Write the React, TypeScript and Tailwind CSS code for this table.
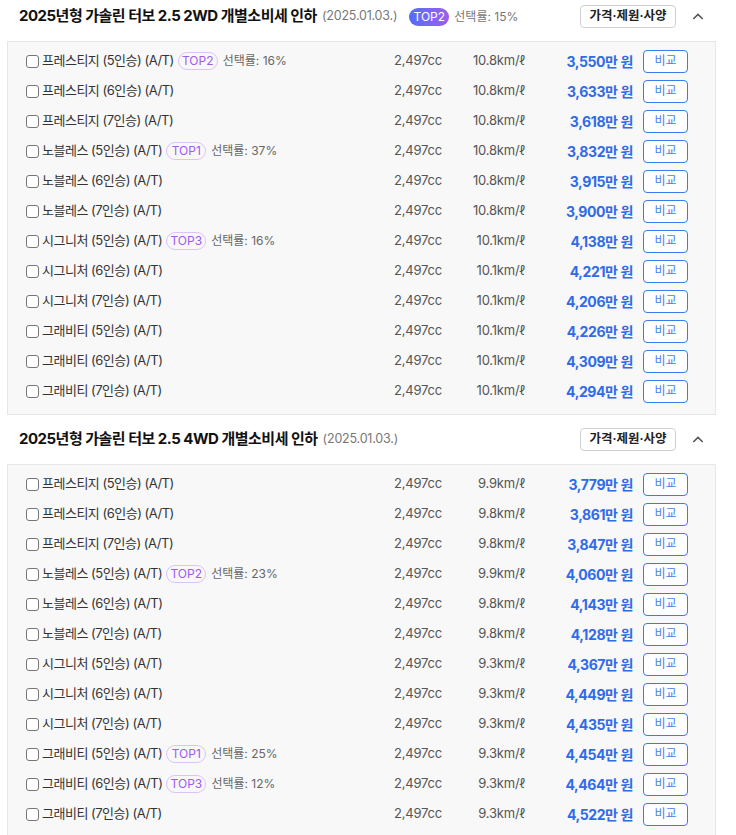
import React from "react";

type Row = { name: string; top?: string; rate?: string; km: string; price: string };

const rows2wd: Row[] = [
  { name: "프레스티지 (5인승) (A/T)", top: "TOP2", rate: "16%", km: "10.8km/ℓ", price: "3,550" },
  { name: "프레스티지 (6인승) (A/T)", km: "10.8km/ℓ", price: "3,633" },
  { name: "프레스티지 (7인승) (A/T)", km: "10.8km/ℓ", price: "3,618" },
  { name: "노블레스 (5인승) (A/T)", top: "TOP1", rate: "37%", km: "10.8km/ℓ", price: "3,832" },
  { name: "노블레스 (6인승) (A/T)", km: "10.8km/ℓ", price: "3,915" },
  { name: "노블레스 (7인승) (A/T)", km: "10.8km/ℓ", price: "3,900" },
  { name: "시그니처 (5인승) (A/T)", top: "TOP3", rate: "16%", km: "10.1km/ℓ", price: "4,138" },
  { name: "시그니처 (6인승) (A/T)", km: "10.1km/ℓ", price: "4,221" },
  { name: "시그니처 (7인승) (A/T)", km: "10.1km/ℓ", price: "4,206" },
  { name: "그래비티 (5인승) (A/T)", km: "10.1km/ℓ", price: "4,226" },
  { name: "그래비티 (6인승) (A/T)", km: "10.1km/ℓ", price: "4,309" },
  { name: "그래비티 (7인승) (A/T)", km: "10.1km/ℓ", price: "4,294" },
];

const rows4wd: Row[] = [
  { name: "프레스티지 (5인승) (A/T)", km: "9.9km/ℓ", price: "3,779" },
  { name: "프레스티지 (6인승) (A/T)", km: "9.8km/ℓ", price: "3,861" },
  { name: "프레스티지 (7인승) (A/T)", km: "9.8km/ℓ", price: "3,847" },
  { name: "노블레스 (5인승) (A/T)", top: "TOP2", rate: "23%", km: "9.9km/ℓ", price: "4,060" },
  { name: "노블레스 (6인승) (A/T)", km: "9.8km/ℓ", price: "4,143" },
  { name: "노블레스 (7인승) (A/T)", km: "9.8km/ℓ", price: "4,128" },
  { name: "시그니처 (5인승) (A/T)", km: "9.3km/ℓ", price: "4,367" },
  { name: "시그니처 (6인승) (A/T)", km: "9.3km/ℓ", price: "4,449" },
  { name: "시그니처 (7인승) (A/T)", km: "9.3km/ℓ", price: "4,435" },
  { name: "그래비티 (5인승) (A/T)", top: "TOP1", rate: "25%", km: "9.3km/ℓ", price: "4,454" },
  { name: "그래비티 (6인승) (A/T)", top: "TOP3", rate: "12%", km: "9.3km/ℓ", price: "4,464" },
  { name: "그래비티 (7인승) (A/T)", km: "9.3km/ℓ", price: "4,522" },
];

function Chevron() {
  return (
    <svg width="14" height="9" viewBox="0 0 14 9" fill="none">
      <path d="M1.5 7.5L7 2L12.5 7.5" stroke="#555" strokeWidth="1.8" />
    </svg>
  );
}

function Header({ title, top, rate }: { title: string; top?: string; rate?: string }) {
  return (
    <div className="flex h-[49px] items-center pl-[19px] pr-[32px]">
      <div className="flex flex-1 items-center">
        <span className="text-[15px] font-bold text-[#111] tracking-[-0.5px]">{title}</span>
        <span className="ml-[5px] text-[12.5px] text-[#777] tracking-[-0.2px]">(2025.01.03.)</span>
        {top && (
          <span className="ml-[12px] flex h-[18px] w-[40px] items-center justify-center rounded-full bg-gradient-to-r from-[#4f6ef7] to-[#9b5cf0] text-[12px] text-white">
            {top}
          </span>
        )}
        {rate && <span className="ml-[5px] text-[12px] text-[#777]">선택률: {rate}</span>}
      </div>
      <button className="flex h-[23px] w-[96px] items-center justify-center rounded-[4px] border border-[#cfcfcf] bg-white text-[12.5px] font-semibold text-[#222]">
        가격·제원·사양
      </button>
      <div className="ml-[16px] flex w-[12px] justify-center">
        <Chevron />
      </div>
    </div>
  );
}

function RowItem({ r }: { r: Row }) {
  return (
    <div className="flex h-[30px] items-center pl-[18px] pr-[27px]">
      <div className="flex flex-1 items-center">
        <span className="h-[13px] w-[13px] rounded-[3px] border border-[#767676] bg-white" />
        <span className="ml-[3px] text-[13px] text-[#333] tracking-[-0.5px]">{r.name}</span>
        {r.top && (
          <span className="ml-[4px] flex h-[18px] w-[40px] items-center justify-center rounded-full border border-[#dcc4fb] text-[12px] text-[#a259f0]">
            {r.top}
          </span>
        )}
        {r.rate && <span className="ml-[5px] text-[12px] text-[#666]">선택률: {r.rate}</span>}
      </div>
      <span className="w-[70px] text-right text-[13px] text-[#555] tracking-[-0.2px]">2,497cc</span>
      <span className="w-[83px] text-right text-[13px] text-[#555] tracking-[-0.2px]">{r.km}</span>
      <span className="w-[108px] text-right text-[14px] font-bold text-[#2f6be8] tracking-[-0.4px]">
        {r.price}만 원
      </span>
      <button className="ml-[10px] flex h-[23px] w-[45px] items-center justify-center rounded-[4px] border border-[#3b7bf0] bg-white text-[12px] text-[#4a80ee]">
        비교
      </button>
    </div>
  );
}

function Section({ title, top, rate, rows }: { title: string; top?: string; rate?: string; rows: Row[] }) {
  return (
    <div>
      <Header title={title} top={top} rate={rate} />
      <div className="ml-[7px] mr-[20px] border border-[#e6e6e6] bg-[#f8f8f8] pt-[4px] pb-[8px]">
        {rows.map((r, i) => (
          <RowItem key={i} r={r} />
        ))}
      </div>
    </div>
  );
}

export default function App() {
  return (
    <div
      className="h-[835px] w-[736px] overflow-hidden bg-white"
      style={{ fontFamily: "Inter, 'Noto Sans CJK KR', sans-serif" }}
    >
      <div className="-mt-[8px]">
        <Section title="2025년형 가솔린 터보 2.5 2WD 개별소비세 인하" top="TOP2" rate="15%" rows={rows2wd} />
        <Section title="2025년형 가솔린 터보 2.5 4WD 개별소비세 인하" rows={rows4wd} />
      </div>
    </div>
  );
}
